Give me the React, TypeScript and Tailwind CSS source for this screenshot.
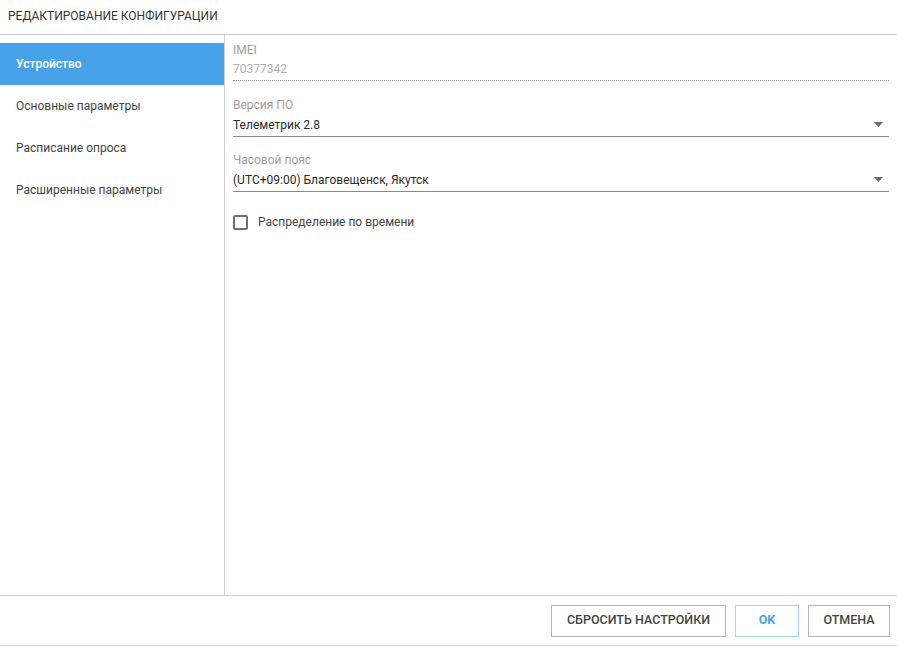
import * as React from "react";

const menu = [
	"Устройство",
	"Основные параметры",
	"Расписание опроса",
	"Расширенные параметры",
];

function Caret() {
	return (
		<svg width="9" height="5" viewBox="0 0 9 5" className="shrink-0">
			<path d="M0 0h9L4.5 5z" fill="#6b6b6b" />
		</svg>
	);
}

function SelectField({ label, value }: { label: string; value: string }) {
	return (
		<div className="flex flex-col">
			<span className="text-[12px] leading-[15px] text-[#9e9e9e]">{label}</span>
			<div className="flex h-[24px] items-center justify-between border-b border-[#8a8a8a] pr-[6px]">
				<span className="text-[12px] text-[#2a2a2a]">{value}</span>
				<Caret />
			</div>
		</div>
	);
}

export default function App() {
	const [active, setActive] = React.useState(0);
	const [spread, setSpread] = React.useState(false);

	return (
		<div
			className="flex h-[646px] w-[897px] flex-col bg-white"
			style={{ fontFamily: "Roboto, 'Noto Sans', sans-serif" }}
		>
			{/* Header */}
			<div className="flex h-[35px] shrink-0 items-center border-b border-[#cfcfcf] px-[8px] pb-[2px]">
				<span className="text-[12px] uppercase text-[#333]">
					Редактирование конфигурации
				</span>
			</div>

			{/* Body */}
			<div className="flex min-h-0 flex-1 border-b border-[#cfcfcf]">
				{/* Nav */}
				<div className="flex w-[225px] shrink-0 flex-col border-r border-[#cfcfcf] pt-[8px]">
					{menu.map((item, i) => (
						<button
							key={item}
							onClick={() => setActive(i)}
							className={
								i === active
									? "flex h-[42px] items-center bg-[#48a2ea] px-[16px] text-left text-[12px] font-medium text-white"
									: "flex h-[42px] items-center px-[16px] text-left text-[12px] text-[#444]"
							}
						>
							{item}
						</button>
					))}
				</div>

				{/* Form */}
				<div className="flex flex-1 flex-col px-[8px] pt-[8px]">
					<div className="flex flex-col">
						<span className="text-[12px] leading-[15px] text-[#9e9e9e]">IMEI</span>
						<div className="flex h-[23px] items-center border-b border-dotted border-[#9a9a9a]">
							<span className="text-[12px] text-[#b0b0b0]">70377342</span>
						</div>
					</div>

					<div className="mt-[17px]">
						<SelectField label="Версия ПО" value="Телеметрик 2.8" />
					</div>

					<div className="mt-[16px]">
						<SelectField
							label="Часовой пояс"
							value="(UTC+09:00) Благовещенск, Якутск"
						/>
					</div>

					<label className="mt-[21px] flex cursor-pointer items-center gap-[10px]">
						<span
							onClick={() => setSpread(!spread)}
							className="flex size-[15px] items-center justify-center rounded-[2px] border-2 border-[#707070] bg-white"
						>
							{spread && <span className="size-[7px] bg-[#48a2ea]" />}
						</span>
						<span className="text-[12px] text-[#444]">Распределение по времени</span>
					</label>
				</div>
			</div>

			{/* Footer */}
			<div className="flex h-[50px] shrink-0 items-center justify-end gap-[9px] border-b border-[#cfcfcf] pr-[7px]">
				<button className="h-[32px] w-[175px] border border-[#b5b5b5] text-[12.5px] font-medium uppercase text-[#444]">
					Сбросить настройки
				</button>
				<button className="h-[32px] w-[64px] border border-[#a9d4f5] text-[12.5px] font-bold uppercase text-[#48a2ea]">
					OK
				</button>
				<button className="h-[32px] w-[82px] border border-[#b5b5b5] text-[12.5px] font-medium uppercase text-[#444]">
					Отмена
				</button>
			</div>
		</div>
	);
}
